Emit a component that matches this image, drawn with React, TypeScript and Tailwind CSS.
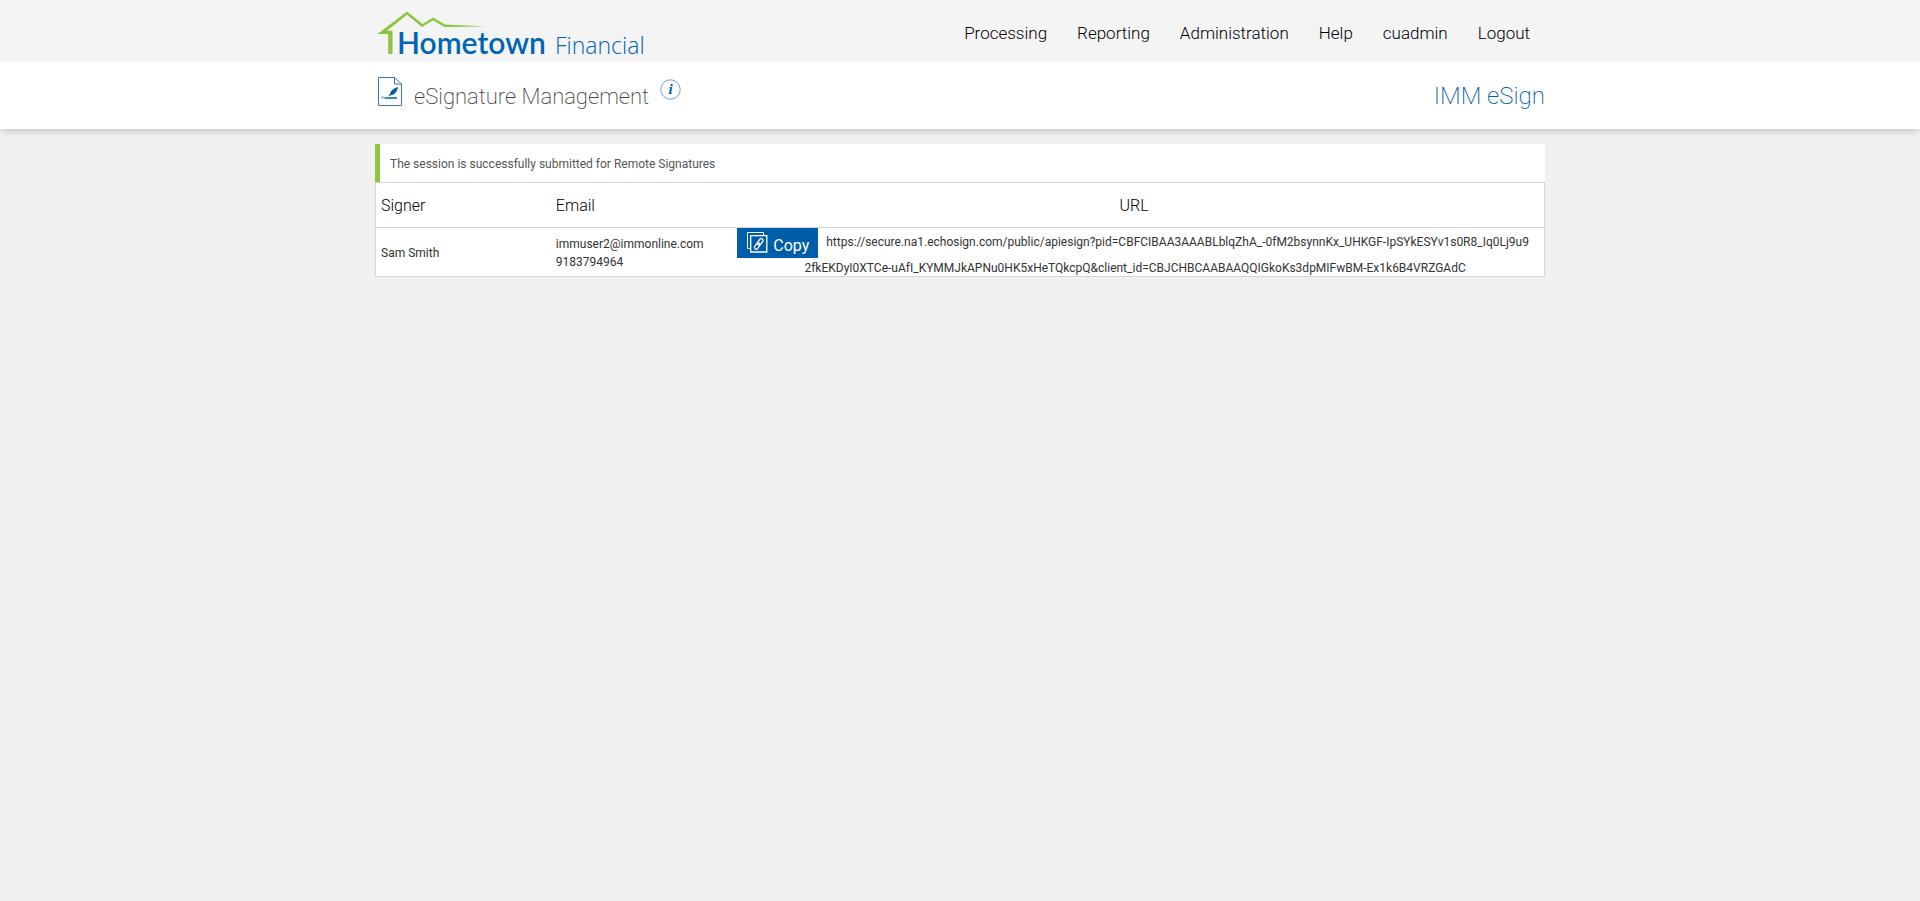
const navItems = ["Processing", "Reporting", "Administration", "Help", "cuadmin", "Logout"];

const signers = [
  {
    name: "Sam Smith",
    email: "immuser2@immonline.com",
    phone: "9183794964",
    url: [
      "https://secure.na1.echosign.com/public/apiesign?pid=CBFCIBAA3AAABLblqZhA_-0fM2bsynnKx_UHKGF-IpSYkESYv1s0R8_Iq0Lj9u9",
      "2fkEKDyI0XTCe-uAfI_KYMMJkAPNu0HK5xHeTQkcpQ&client_id=CBJCHBCAABAAQQIGkoKs3dpMIFwBM-Ex1k6B4VRZGAdC",
    ],
  },
];

function Logo() {
  return (
    <svg className="ml-[2px] h-[52px] w-[280px]" viewBox="0 0 280 52" role="img" aria-label="Hometown Financial">
      <path
        d="M.5 24 30 1.500 45.500 14 56 7.500 68 14.500 109 16.500 67.500 17 56 10.300 45 17 30 4.700 10 20.800H15.500V44H11.200V24Z"
        fill="#8cc63f"
      />
      <text x="20" y="44" className="font-[Lato] text-[30px] font-semibold" fill="#0066b3">
        Hometown
      </text>
      <text x="178" y="44" className="font-['Open_Sans'] text-[23px] font-light" fill="#0066b3">
        Financial
      </text>
    </svg>
  );
}

function SignatureIcon() {
  return (
    <svg className="h-[30px] w-6" viewBox="0 0 24 30" fill="none" aria-hidden="true">
      <path d="M.5 1.5H16.500L23.500 8V29.500H.5ZM16.500 1.5V8H23.500" stroke="#3a75b0" />
      <path d="M6.500 22H19" stroke="#005da9" strokeWidth="1.500" />
      <path d="M3.500 20.500 5.500 22.500M5.500 20.500 3.500 22.500" stroke="#005da9" strokeWidth=".7" />
      <path d="M20 11C15.500 12.500 12.500 14.500 12 18L10 20.500 13 19.300C17 18.500 19.500 15 20 11Z" fill="#005da9" />
    </svg>
  );
}

function InfoIcon() {
  return (
    <svg className="size-[21px]" viewBox="0 0 21 21" aria-hidden="true">
      <circle cx="10.500" cy="10.500" r="9.700" fill="none" stroke="#4f84b4" strokeWidth=".8" />
      <text x="10.500" y="15" textAnchor="middle" className="font-['Liberation_Serif'] text-[15px] font-bold italic" fill="#005da9">
        i
      </text>
    </svg>
  );
}

function CopyIcon() {
  return (
    <svg className="size-[21px]" viewBox="0 0 21 21" fill="none" stroke="#fff" aria-hidden="true">
      <path d="M3.500 16.500H.5V.5H16.500V3.500" />
      <path d="M3.700 3.700H19.800V20H3.700Z" strokeWidth="1.300" />
      <g transform="rotate(35 11.700 12)" strokeWidth="1.300">
        <rect x="9.900" y="5.800" width="3.600" height="7" rx="1.800" />
        <rect x="9.900" y="11" width="3.600" height="7" rx="1.800" />
      </g>
    </svg>
  );
}

export default function App() {
  return (
    <div className="min-h-screen bg-[#f0f0f0] font-[Roboto,sans-serif] text-xs text-[#333]">
      <header className="bg-[#f4f4f4]">
        <div className="mx-auto flex h-[62px] max-w-[1170px] justify-between pt-[10px]">
          <a href="#">
            <Logo />
          </a>
          <nav className="flex gap-[30px] pt-2 pr-[15px] text-[17px] font-light text-black">
            {navItems.map((item) => (
              <a key={item} href="#" className="h-8 leading-[30px]">
                {item}
              </a>
            ))}
          </nav>
        </div>
      </header>

      <div className="bg-white shadow-[0_4px_6px_-2px_rgba(0,0,0,0.2)]">
        <div className="mx-auto flex h-[67px] max-w-[1170px] justify-between pt-[14px] pl-[3px]">
          <div className="flex">
            <SignatureIcon />
            <h1 className="ml-3 pt-1 text-[22px] leading-[34px] font-extralight text-[#444]">eSignature Management</h1>
            <button type="button" aria-label="Information" className="ml-[11px] h-6 cursor-pointer pt-[2px]">
              <InfoIcon />
            </button>
          </div>
          <span className="pt-1 text-2xl leading-8 font-extralight text-[#005da9]">IMM eSign</span>
        </div>
      </div>

      <main className="mx-auto max-w-[1170px] pt-[15px]">
        <p role="status" className="border-l-[5px] border-[#8cc63f] bg-white px-[10px] pt-[11px] pb-[9px] leading-[18px] text-[#555]">
          The session is successfully submitted for Remote Signatures
        </p>
        <table className="w-full table-fixed border-collapse border border-[#d4d4d4] bg-white">
          <thead>
            <tr className="h-[45px] border-b border-[#d4d4d4] text-base text-black">
              <th className="w-[15%] px-[5px] pt-[2px] text-left font-light">Signer</th>
              <th className="w-[15%] px-[5px] pt-[2px] text-left font-light">Email</th>
              <th className="pt-[2px] pr-[2px] font-light">URL</th>
            </tr>
          </thead>
          <tbody>
            {signers.map((signer) => (
              <tr key={signer.name} className="h-[49px]">
                <td className="px-[5px] pt-[2px]">{signer.name}</td>
                <td className="px-[5px] pt-[2px] leading-[18px]">
                  {signer.email}
                  <br />
                  {signer.phone}
                </td>
                <td className="text-center whitespace-nowrap">
                  <div className="flex justify-center gap-2 pr-1">
                    <button
                      type="button"
                      className="flex h-[30px] cursor-pointer gap-[5px] bg-[#005da9] pt-1 pr-[9px] pl-[10px] text-base text-white"
                    >
                      <CopyIcon />
                      <span className="leading-7">Copy</span>
                    </button>
                    <span className="leading-7">{signer.url[0]}</span>
                  </div>
                  <div className="h-[18px] leading-5">{signer.url[1]}</div>
                </td>
              </tr>
            ))}
          </tbody>
        </table>
      </main>
    </div>
  );
}
